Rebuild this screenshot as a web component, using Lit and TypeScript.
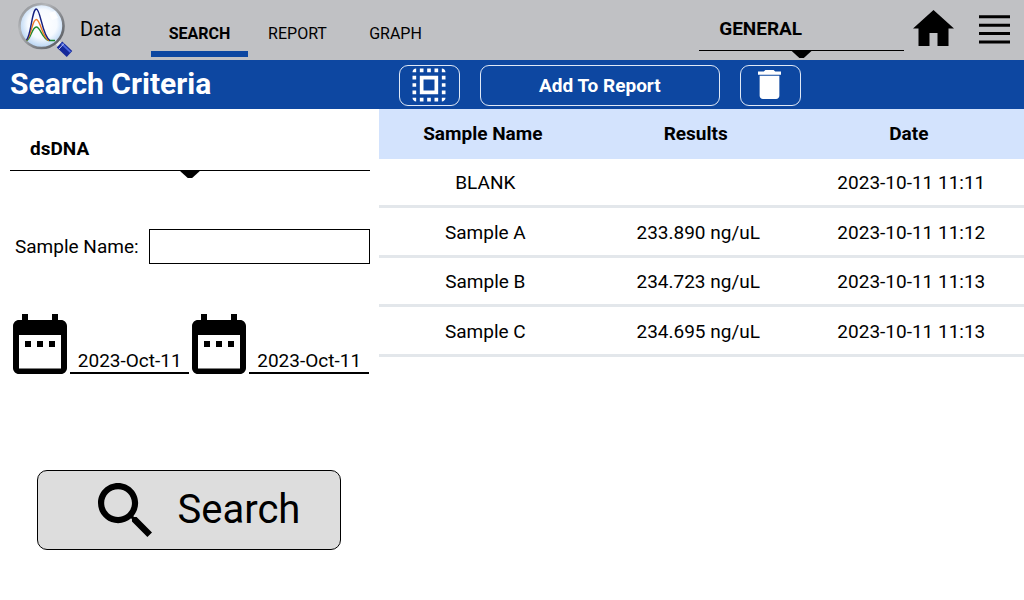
import { LitElement, html, css, svg } from "lit";
import { customElement, property, state } from "lit/decorators.js";
import { classMap } from "lit/directives/class-map.js";

interface Sample {
  name: string;
  result: string;
  date: string;
}

const logoIcon = svg`
  <svg class="logo" viewBox="0 0 56 56" aria-hidden="true">
    <defs>
      <radialGradient id="lens" cx="52%" cy="45%" r="55%">
        <stop offset="0" stop-color="#ffffff" />
        <stop offset="0.6" stop-color="#f6faff" />
        <stop offset="1" stop-color="#b4d2f2" />
      </radialGradient>
      <linearGradient id="rim" x1="0" y1="0" x2="1" y2="1">
        <stop offset="0" stop-color="#85888d" />
        <stop offset="0.3" stop-color="#b4b6b9" />
        <stop offset="0.65" stop-color="#808388" />
        <stop offset="1" stop-color="#505358" />
      </linearGradient>
    </defs>
    <path d="M38.500 39.500l4.500 4.500" stroke="#e8e8ea" stroke-width="5" />
    <path d="M41.500 42.500l10 9.500" stroke="#14289a" stroke-width="8" />
    <path d="M43.500 41.500l9 8.600" stroke="#4b68e0" stroke-width="1.800" />
    <path d="M41 47l5-5.500" stroke="#c9cdf0" stroke-width="1" />
    <circle cx="23.500" cy="24" r="22" fill="url(#lens)" stroke="url(#rim)" stroke-width="2.600" />
    <path d="M31 11l6-2 3 7-6 2z" fill="#ffffff" opacity=".8" />
    <g fill="none" stroke-width="1.400">
      <path d="M8.500 38.500C13 37 14 25 18.300 25S24 37 31 38.500L37 38.500" stroke="#1d8a2b" />
      <path d="M8.500 38C13 36 14 17.500 18.300 17.500S24 36 31 38.500" stroke="#ee7a26" />
      <path d="M8.500 38C13 34 14 7 18.300 7S24 34 32 38.500" stroke="#15207f" />
    </g>
  </svg>`;

const homeIcon = svg`
  <svg class="home" viewBox="0 0 41 36" aria-hidden="true">
    <path d="M20.500 0L41 18.500H35.500V36H24.500V23H16.500V36H5.500V18.500H0z" />
  </svg>`;

const menuIcon = svg`
  <svg class="menu" viewBox="0 0 31 29" aria-hidden="true">
    <path d="M0 1.800h31M0 10.200h31M0 18.600h31M0 27h31" stroke="#000" stroke-width="3" />
  </svg>`;

const selectAllIcon = svg`
  <svg class="select-all" viewBox="0 0 24 24" aria-hidden="true">
    <path fill="currentColor" d="M3 5h2V3c-1.100 0-2 .9-2 2zm0 8h2v-2H3v2zm4 8h2v-2H7v2zM3 9h2V7H3v2zm10-6h-2v2h2V3zm6 0v2h2c0-1.100-.9-2-2-2zM5 21v-2H3c0 1.100.9 2 2 2zm-2-4h2v-2H3v2zM9 3H7v2h2V3zm2 18h2v-2h-2v2zm8-8h2v-2h-2v2zm0 8c1.100 0 2-.9 2-2h-2v2zm0-12h2V7h-2v2zm0 8h2v-2h-2v2zm-4 4h2v-2h-2v2zm0-16h2V3h-2v2zM7 17h10V7H7v10zm2-8h6v6H9V9z" />
  </svg>`;

const trashIcon = svg`
  <svg class="trash" viewBox="5 3 14 18" preserveAspectRatio="none" aria-hidden="true">
    <path fill="currentColor" d="M6 19c0 1.100.9 2 2 2h8c1.100 0 2-.9 2-2V6.600H6V19zM19 4h-3.500l-1-1h-5l-1 1H5v2h14V4z" />
  </svg>`;

const calendarIcon = svg`
  <svg class="calendar" viewBox="3 2 18 20" preserveAspectRatio="none" aria-hidden="true">
    <path d="M9 11H7v2h2v-2zm4 0h-2v2h2v-2zm4 0h-2v2h2v-2zm2-7h-1V2h-2v2H8V2H6v2H5c-1.110 0-1.990.9-1.990 2L3 20c0 1.100.89 2 2 2h14c1.100 0 2-.9 2-2V6c0-1.100-.9-2-2-2zm0 16.200H5V9h14v11.200z" />
  </svg>`;

const searchIcon = svg`
  <svg class="magnifier" viewBox="3 3 17.490 17.490" aria-hidden="true">
    <path d="M15.500 14h-.79l-.28-.27C15.410 12.590 16 11.110 16 9.500 16 5.910 13.090 3 9.500 3S3 5.910 3 9.500 5.910 16 9.500 16c1.610 0 3.090-.59 4.230-1.570l.27.28v.79l5 4.990L20.490 19l-4.990-5zm-6 0C7.010 14 5 11.990 5 9.500S7.010 5 9.500 5 14 7.010 14 9.500 11.990 14 9.500 14z" />
  </svg>`;

@customElement("drop-down")
class DropDown extends LitElement {
  @property() label = "";
  @property({ type: Array }) options: string[] = [];

  static styles = css`
    :host {
      display: block;
      position: relative;
      border-bottom: 1px solid #000;
    }
    :host::after {
      content: "";
      position: absolute;
      top: 100%;
      left: calc(50% - 11px);
      width: 22px;
      height: 8px;
      background: #000;
      clip-path: polygon(0 0, 100% 0, 60% 100%, 40% 100%);
    }
    .field {
      display: block;
      box-sizing: border-box;
      width: 100%;
      height: 44px;
      padding: 0 20px;
      border: 0;
      background: transparent;
      appearance: none;
      color: #000;
      font: 700 19px Roboto, sans-serif;
    }
  `;

  render() {
    return html`<select class="field" aria-label=${this.label}>
      ${this.options.map((o) => html`<option>${o}</option>`)}
    </select>`;
  }
}

@customElement("app-root")
class AppRoot extends LitElement {
  @state() private tab = "SEARCH";

  private tabs = ["SEARCH", "REPORT", "GRAPH"];

  private samples: Sample[] = [
    { name: "BLANK", result: "", date: "2023-10-11 11:11" },
    { name: "Sample A", result: "233.890 ng/uL", date: "2023-10-11 11:12" },
    { name: "Sample B", result: "234.723 ng/uL", date: "2023-10-11 11:13" },
    { name: "Sample C", result: "234.695 ng/uL", date: "2023-10-11 11:13" },
  ];

  static styles = css`
    :host {
      display: flex;
      flex-direction: column;
      min-height: 100vh;
      background: #fff;
      color: #000;
      font: 19px/24px Roboto, sans-serif;
    }
    button {
      padding: 0;
      border: 0;
      background: none;
      color: inherit;
      font: inherit;
      cursor: pointer;
    }
    svg {
      display: block;
    }
    .top {
      display: flex;
      height: 60px;
      background: #c0c1c4;
    }
    .logo {
      width: 56px;
      height: 56px;
      margin: 2px 6px 0 18px;
    }
    .section {
      width: 71px;
      font-size: 20px;
      line-height: 58px;
    }
    .tabs {
      display: flex;
      gap: 1px;
      height: 57px;
    }
    .tab {
      box-sizing: border-box;
      width: 97px;
      padding-top: 16px;
      border-bottom: 6px solid transparent;
      font-size: 16px;
    }
    .tab.active {
      border-color: #0d47a1;
      font-weight: 700;
    }
    .mode {
      width: 20%;
      height: 44px;
      margin: 6px 9px 0 auto;
    }
    .tools {
      display: flex;
      gap: 25px;
      align-items: flex-start;
      padding: 10px 14px 0 0;
    }
    .home {
      width: 41px;
      height: 36px;
    }
    .menu {
      width: 31px;
      height: 29px;
      margin-top: 5px;
    }
    .bar {
      display: flex;
      align-items: flex-start;
      height: 49px;
      background: #0d47a1;
      color: #fff;
    }
    .title {
      box-sizing: border-box;
      width: 37%;
      margin: 0;
      padding-left: 10px;
      font-size: 30px;
      line-height: 47px;
    }
    .actions {
      display: flex;
      flex: 1;
      gap: 20px;
      padding: 5px 0 0 20px;
    }
    .action {
      display: flex;
      align-items: center;
      justify-content: center;
      box-sizing: border-box;
      width: 61px;
      height: 41px;
      border: 1px solid #dfe8f6;
      border-radius: 9px;
      font-weight: 700;
    }
    .action svg {
      margin: 0 1px 2px 0;
    }
    .action.wide {
      width: 240px;
    }
    .select-all {
      width: 44px;
      height: 44px;
    }
    .trash {
      width: 23px;
      height: 29px;
    }
    .body {
      display: flex;
      flex: 1;
      align-items: flex-start;
    }
    .criteria {
      display: flex;
      flex-direction: column;
      box-sizing: border-box;
      width: 37%;
      padding: 17px 9px 0 10px;
    }
    .name {
      display: flex;
      align-items: center;
      gap: 10px;
      margin-top: 58px;
      padding-left: 5px;
    }
    .name-input {
      box-sizing: border-box;
      flex: 1;
      min-width: 0;
      height: 35px;
      border: 1px solid #000;
      border-radius: 0;
      background: #fff;
      font: inherit;
    }
    .dates {
      display: flex;
      align-items: flex-end;
      gap: 3px;
      margin-top: 50px;
      padding: 0 1px 0 3px;
    }
    .calendar {
      width: 54px;
      height: 60px;
    }
    .date-input {
      box-sizing: border-box;
      flex: 1;
      min-width: 0;
      height: 26px;
      padding: 0;
      border: 0;
      border-bottom: 2px solid #000;
      background: none;
      text-align: center;
      font: inherit;
    }
    .search {
      display: flex;
      align-items: center;
      justify-content: center;
      gap: 26px;
      box-sizing: border-box;
      height: 80px;
      margin: 96px 29px 0 27px;
      padding-left: 20px;
      border: 1px solid #000;
      border-radius: 10px;
      background: #ddd;
      font-size: 40px;
      line-height: 48px;
    }
    .magnifier {
      width: 54px;
      height: 54px;
    }
    .results {
      flex: 1;
      table-layout: fixed;
      border-collapse: separate;
      border-spacing: 0;
      text-align: center;
    }
    .results th {
      box-sizing: border-box;
      width: 33%;
      height: 50px;
      padding: 0 5px 0 0;
      background: #d3e3fd;
    }
    .results td {
      box-sizing: border-box;
      height: 49px;
      padding: 2px 0 0;
      border-bottom: 3px solid #e3e7eb;
    }
    .results tr:nth-child(even) td {
      height: 50px;
    }
    .results th:last-child {
      width: 34%;
      padding-right: 11px;
    }
    .results td:last-child {
      padding-right: 6px;
    }
  `;

  render() {
    return html`
      <header class="top">
        ${logoIcon}
        <span class="section">Data</span>
        <nav class="tabs">
          ${this.tabs.map(
            (t) => html`<button
              class=${classMap({ tab: true, active: t === this.tab })}
              @click=${() => (this.tab = t)}
            >${t}</button>`
          )}
        </nav>
        <drop-down class="mode" label="Mode" .options=${["GENERAL"]}></drop-down>
        <div class="tools">
          <button aria-label="Home">${homeIcon}</button>
          <button aria-label="Menu">${menuIcon}</button>
        </div>
      </header>
      <div class="bar">
        <h1 class="title">Search Criteria</h1>
        <div class="actions">
          <button class="action" aria-label="Select all">${selectAllIcon}</button>
          <button class="action wide">Add To Report</button>
          <button class="action" aria-label="Delete">${trashIcon}</button>
        </div>
      </div>
      <main class="body">
        <form class="criteria" @submit=${(e: Event) => e.preventDefault()}>
          <drop-down label="Sample type" .options=${["dsDNA"]}></drop-down>
          <div class="name">
            <label for="sample-name">Sample Name:</label>
            <input class="name-input" id="sample-name" type="text" />
          </div>
          <div class="dates">
            <button type="button" aria-label="Pick start date">${calendarIcon}</button>
            <input class="date-input" aria-label="Start date" .value=${"2023-Oct-11"} />
            <button type="button" aria-label="Pick end date">${calendarIcon}</button>
            <input class="date-input" aria-label="End date" .value=${"2023-Oct-11"} />
          </div>
          <button class="search" type="submit">${searchIcon}<span>Search</span></button>
        </form>
        <table class="results">
          <thead>
            <tr>
              <th>Sample Name</th>
              <th>Results</th>
              <th>Date</th>
            </tr>
          </thead>
          <tbody>
            ${this.samples.map(
              (s) => html`<tr>
                <td>${s.name}</td>
                <td>${s.result}</td>
                <td>${s.date}</td>
              </tr>`
            )}
          </tbody>
        </table>
      </main>
    `;
  }
}
